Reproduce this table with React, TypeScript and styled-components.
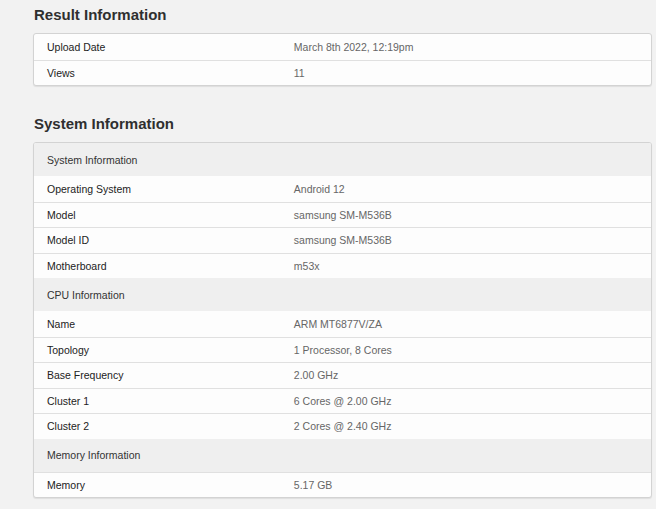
import React from "react";
import styled, { createGlobalStyle } from "styled-components";

const Global = createGlobalStyle`
  html, body {
    margin: 0;
    padding: 0;
    background: #f2f2f2;
  }
  body {
    font-family: "Liberation Sans", Arial, sans-serif;
  }
`;

const Page = styled.div`
  padding: 6px 0 12px 33px;
  width: 619px;
`;

const Section = styled.section<{ $gap?: number }>`
  margin-top: ${(p) => p.$gap ?? 0}px;
`;

const Title = styled.h2`
  margin: 0 0 9px 1px;
  font-size: 15px;
  line-height: 18px;
  font-weight: 700;
  color: #2f2f2f;
`;

const Card = styled.div`
  background: #fdfdfd;
  border: 1px solid #d3d3d3;
  border-radius: 3px;
  box-shadow: 0 1px 1px rgba(0, 0, 0, 0.08);
  overflow: hidden;
`;

const Row = styled.div<{ $first?: boolean }>`
  display: grid;
  grid-template-columns: 40% 60%;
  align-items: center;
  box-sizing: border-box;
  height: 25.5px;
  border-top: ${(p) => (p.$first ? "none" : "1px solid #e0e0e0")};
  font-size: 10.5px;
`;

const Label = styled.div`
  padding: 0 13px;
  color: #222;
`;

const Value = styled.div`
  padding: 0 13px;
  color: #666;
`;

const Header = styled.div`
  display: flex;
  align-items: center;
  height: 33px;
  padding: 0 13px;
  background: #efefef;
  color: #333;
  font-size: 10.5px;
`;

type Item = [string, string];

const result: Item[] = [
  ["Upload Date", "March 8th 2022, 12:19pm"],
  ["Views", "11"],
];

const groups: { title: string; rows: Item[] }[] = [
  {
    title: "System Information",
    rows: [
      ["Operating System", "Android 12"],
      ["Model", "samsung SM-M536B"],
      ["Model ID", "samsung SM-M536B"],
      ["Motherboard", "m53x"],
    ],
  },
  {
    title: "CPU Information",
    rows: [
      ["Name", "ARM MT6877V/ZA"],
      ["Topology", "1 Processor, 8 Cores"],
      ["Base Frequency", "2.00 GHz"],
      ["Cluster 1", "6 Cores @ 2.00 GHz"],
      ["Cluster 2", "2 Cores @ 2.40 GHz"],
    ],
  },
  {
    title: "Memory Information",
    rows: [["Memory", "5.17 GB"]],
  },
];

export default function App() {
  return (
    <>
      <Global />
      <Page>
        <Section>
          <Title>Result Information</Title>
          <Card>
            {result.map(([k, v], i) => (
              <Row key={k} $first={i === 0}>
                <Label>{k}</Label>
                <Value>{v}</Value>
              </Row>
            ))}
          </Card>
        </Section>
        <Section $gap={29}>
          <Title>System Information</Title>
          <Card>
            {groups.map((g) => (
              <React.Fragment key={g.title}>
                <Header>{g.title}</Header>
                {g.rows.map(([k, v], i) => (
                  <Row key={k} $first={i === 0 && g.title !== "Memory Information"}>
                    <Label>{k}</Label>
                    <Value>{v}</Value>
                  </Row>
                ))}
              </React.Fragment>
            ))}
          </Card>
        </Section>
      </Page>
    </>
  );
}
